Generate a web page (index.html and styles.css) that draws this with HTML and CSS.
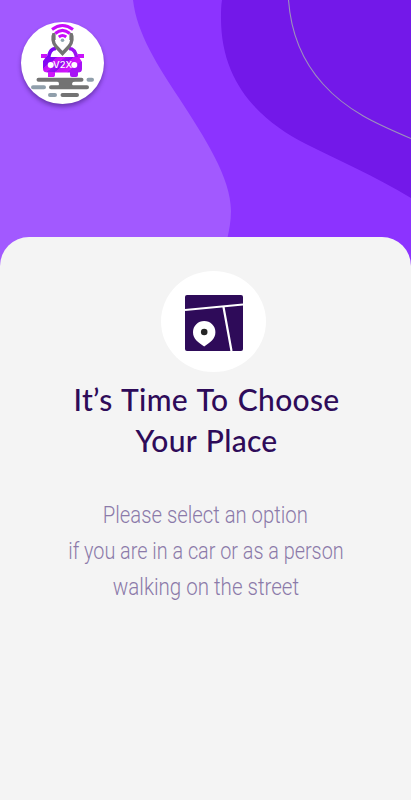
FILE: index.html
```html
<!DOCTYPE html>
<html lang="en">
<head>
<meta charset="utf-8">
<meta name="viewport" content="width=device-width, initial-scale=1">
<title>V2X</title>
<link rel="stylesheet" href="styles.css">
</head>
<body>
<main class="screen">
  <svg class="waves" viewBox="0 0 411 280" aria-hidden="true">
    <path fill="#a259ff" d="M0 0H133C137 34 158 66 179 98C205 138 231 178 231 211C231 221 229 231 227 240V280H0Z"/>
    <path fill="#7318e9" d="M222 0H411V198C375 176 336 159 306 144C261 121 221 84 221 18C221 11 221 6 222 0Z"/>
    <path fill="none" stroke="#9c91bb" stroke-width="1.100" d="M288.500 0C291 34 303 62 323 84C347 111 377 124 411 138.500"/>
  </svg>
  <header class="top">
    <div class="logo">
      <svg viewBox="0 0 83 83" width="83" height="83" role="img" aria-label="V2X">
        <defs>
          <linearGradient id="car" x1="0" y1="0" x2="1" y2=".65">
            <stop offset=".25" stop-color="#8306f4"/><stop offset=".26" stop-color="#b810f7"/>
            <stop offset=".4" stop-color="#d414fb"/><stop offset=".41" stop-color="#a310f1"/>
            <stop offset=".55" stop-color="#8b0cef"/><stop offset=".56" stop-color="#c412f8"/>
            <stop offset=".78" stop-color="#d015fb"/><stop offset=".79" stop-color="#a712f5"/>
          </linearGradient>
        </defs>
        <path d="M27.500 37C28 30 30 26.500 35 26.500" fill="none" stroke="#7e06f5" stroke-width="3.500"/>
        <path d="M55.800 37C55 30 53 26.500 48 26.500" fill="none" stroke="#9a12f1" stroke-width="3.500"/>
        <path fill="#c914fa" d="M20 32h6v4h-6zM57 32h6v4h-6z"/>
        <path fill="url(#car)" d="M25 35H58L61 40V47Q61 50.500 57 50.500V53Q57 55 55 55H51Q49 55 49 53V50.500H34V53Q34 55 32 55H29Q27 55 27 53V50.500Q22 50.500 22 47V39Z"/>
        <path fill="#cf15fb" d="M27 50h6.500v3q0 2-2 2h-4.500z"/>
        <path d="M33 12C31.500 14.500 31.500 21 35 24.500L41.500 31.500L48 24.500C51.500 21 51.500 14.500 50 12" fill="#fff" stroke="#737373" stroke-width="3.500"/>
        <path d="M31 11Q41.500 0 52 11L47 17H36Z" fill="#fff"/>
        <path d="M33 11V18M50 11V18" stroke="#737373" stroke-width="3.200"/>
        <path d="M31 7.500Q41.500-.500 52 7.500M34.200 11.500Q41.500 5 48.800 11.500M37.800 15Q41.500 11.500 45.200 15" fill="none" stroke="#fff" stroke-width="4.200"/>
        <path d="M31 7.500Q41.500-.500 52 7.500M34.200 11.500Q41.500 5.200 48.800 11.500M37.800 15Q41.500 12 45.200 15" fill="none" stroke="#c90cfa" stroke-width="3"/>
        <circle cx="41.500" cy="18.300" r="1.800" fill="#8fa5b0"/>
        <circle cx="29.700" cy="43" r="3" fill="#fff"/><circle cx="53.300" cy="43" r="3" fill="#fff"/>
        <text class="logo-name" x="32" y="46.200" textLength="19" lengthAdjust="spacingAndGlyphs">V2X</text>
        <g stroke-width="4" stroke-linecap="round">
          <path stroke="#737373" d="M17.500 57.700H60.500M30 65.300H66M41.500 73H56"/>
          <path stroke="#909fab" d="M67.500 57.700H71M12 65.300H23M29 73H34"/>
        </g>
        <path fill="#737373" d="M36 59H54Q51 60 51 62T54 65H36Q38 64 38 62T36 59Z"/>
      </svg>
    </div>
  </header>
  <section class="sheet">
    <div class="badge">
      <svg viewBox="0 0 58 56" width="58" height="56" aria-hidden="true">
        <rect width="58" height="56" rx="2" fill="#2e0b59"/>
        <path d="M0 15L58 9.500M38.500 12L46.500 56" stroke="#fff" stroke-width="2.200"/>
        <path d="M19.200 26a11.200 11.200 0 0 1 11.200 11.200C30.400 44 25 47.500 19.200 51.500C13.500 47.500 8 44 8 37.200A11.200 11.200 0 0 1 19.200 26Z" fill="#fff"/>
        <circle cx="19.200" cy="37" r="3.300" fill="#252525"/>
      </svg>
    </div>
    <h1 class="title"><span class="title-first">It’s Time To Choose</span><span class="title-second">Your Place</span></h1>
    <p class="copy"><span class="copy-first">Please select an option</span><span class="copy-second">if you are in a car or as a person</span><span class="copy-third">walking on the street</span></p>
  </section>
</main>
</body>
</html>
```
FILE: styles.css
```css
* { box-sizing: border-box; }
body { margin: 0; background: #f4f4f4; }
.screen {
  position: relative;
  display: flex;
  flex-direction: column;
  height: 800px;
  overflow: hidden;
  background: #8c33ff;
}
.waves { position: absolute; top: 0; left: 0; width: 411px; height: 280px; }
.top { position: relative; flex: 0 0 237px; padding: 21.5px 21px 0; }
.logo {
  width: 83px;
  height: 82px;
  border-radius: 50%;
  overflow: hidden;
  background: #fff;
  box-shadow: 0 3px 4px rgba(45, 10, 90, .45);
}
.logo svg { display: block; }
.logo-name { font: 500 8.8px Inter, sans-serif; fill: #fff; }
.sheet {
  position: relative;
  flex: 1;
  display: flex;
  flex-direction: column;
  align-items: center;
  padding-top: 34px;
  border-radius: 29px 29px 0 0;
  background: #f4f4f4;
}
.badge {
  display: flex;
  align-items: center;
  justify-content: center;
  width: 105px;
  height: 101px;
  margin-left: 16px;
  padding-top: 2px;
  border-radius: 50%;
  background: #fff;
}
.title {
  display: flex;
  flex-direction: column;
  align-items: center;
  margin: 7px 0 0 2px;
  font: 500 30px/41px Lato, sans-serif;
  letter-spacing: .3px;
  word-spacing: 1.6px;
  color: #2e0b59;
  white-space: nowrap;
}
.copy {
  display: flex;
  flex-direction: column;
  align-items: center;
  margin: 36px 0 0;
  font: 300 24px/36px Roboto, sans-serif;
  color: #8b7aa9;
  white-space: nowrap;
}
.copy-first { transform: scaleX(.845); }
.copy-second { transform: scaleX(.825); }
.copy-third { transform: scaleX(.855); }
```
